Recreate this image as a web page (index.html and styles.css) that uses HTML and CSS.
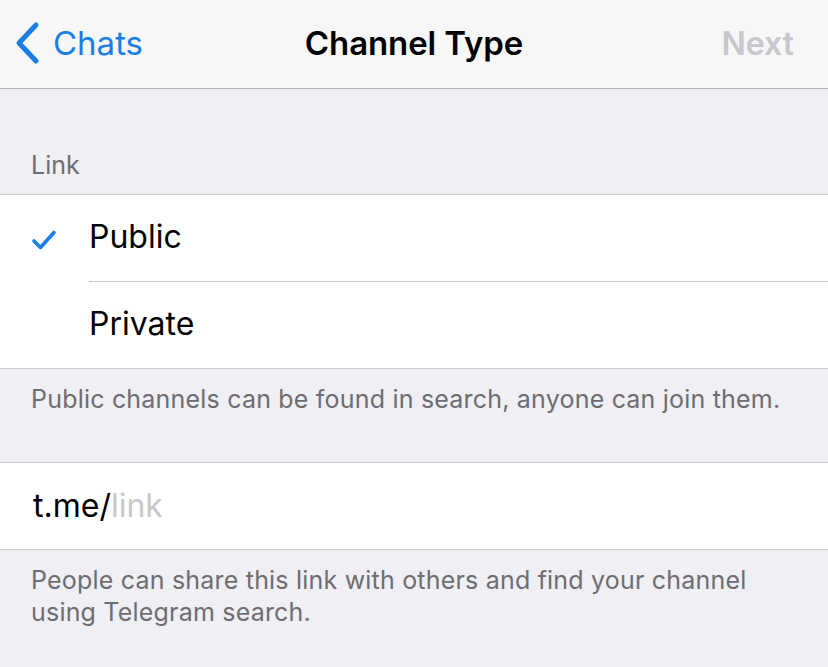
FILE: index.html
```html
<!DOCTYPE html>
<html>
<head>
<meta charset="utf-8">
<link rel="stylesheet" href="styles.css">
</head>
<body>
<div class="screen">
  <header class="nav">
    <div class="nav-left">
      <svg class="back" width="26" height="44" viewBox="0 0 26 44"><path d="M22 4 L5 22 L22 40" fill="none" stroke="#1a7ee6" stroke-width="5" stroke-linecap="round" stroke-linejoin="round"/></svg>
      <span class="back-label">Chats</span>
    </div>
    <div class="nav-title">Channel Type</div>
    <div class="nav-right">Next</div>
  </header>

  <div class="section-header">Link</div>
  <div class="group">
    <div class="row">
      <span class="check">
        <svg width="26" height="22" viewBox="0 0 26 22"><path d="M3 12 L9.5 18.5 L23 3.5" fill="none" stroke="#1a7ee6" stroke-width="3.6" stroke-linecap="round" stroke-linejoin="round"/></svg>
      </span>
      <span class="row-label">Public</span>
    </div>
    <div class="row">
      <span class="check"></span>
      <span class="row-label">Private</span>
    </div>
  </div>
  <div class="section-footer first">Public channels can be found in search, anyone can join them.</div>

  <div class="group">
    <div class="row link-row">
      <span class="prefix">t.me/</span><span class="placeholder">link</span>
    </div>
  </div>
  <div class="section-footer">People can share this link with others and find your channel using Telegram search.</div>
</div>
</body>
</html>
```
FILE: styles.css
```css
* { box-sizing: border-box; }
html, body { margin: 0; padding: 0; }
body {
  width: 828px;
  height: 667px;
  overflow: hidden;
  background: #efeff4;
  font-family: Inter, "Noto Sans", sans-serif;
  -webkit-font-smoothing: antialiased;
}
.screen { display: flex; flex-direction: column; }

.nav {
  height: 89px;
  background: #f7f7f7;
  border-bottom: 1px solid #b2b2b2;
  display: grid;
  grid-template-columns: 1fr auto 1fr;
  align-items: center;
  padding: 0 0 2px 0;
}
.nav-left { display: flex; align-items: center; gap: 13px; color: #1a7ee6; font-size: 33px; padding-left: 14px; }
.back { display: block; }
.nav-title { font-size: 33px; font-weight: 600; color: #000; letter-spacing: -0.1px; }
.nav-right { justify-self: end; font-size: 32px; font-weight: 600; color: #c7c7cc; padding-right: 34px; }

.section-header {
  height: 105px;
  display: flex;
  align-items: flex-end;
  padding: 0 0 14px 31px;
  font-size: 25px;
  color: #6d6d72;
}

.group {
  background: #fff;
  border-top: 1px solid #c8c7cc;
  border-bottom: 1px solid #c8c7cc;
}
.row {
  height: 87px;
  display: flex;
  align-items: center;
}
.row + .row .row-label { border-top: 1px solid #c8c7cc; }
.row:first-child { height: 86px; }
.check { width: 89px; flex: none; display: flex; padding-left: 31px; padding-top: 4px; }
.row-label {
  flex: 1;
  height: 100%;
  display: flex;
  align-items: center;
  padding-bottom: 3px;
  font-size: 32px;
  color: #000;
}

.link-row { padding-left: 33px; font-size: 32px; height: 86px; padding-bottom: 2px; }
.prefix { color: #000; }
.placeholder { color: #c7c7cd; }

.section-footer {
  padding: 14px 40px 0 31px;
  font-size: 25px;
  line-height: 32px;
  letter-spacing: 0.2px;
  color: #6d6d72;
}
.section-footer.first { height: 93px; }
```
